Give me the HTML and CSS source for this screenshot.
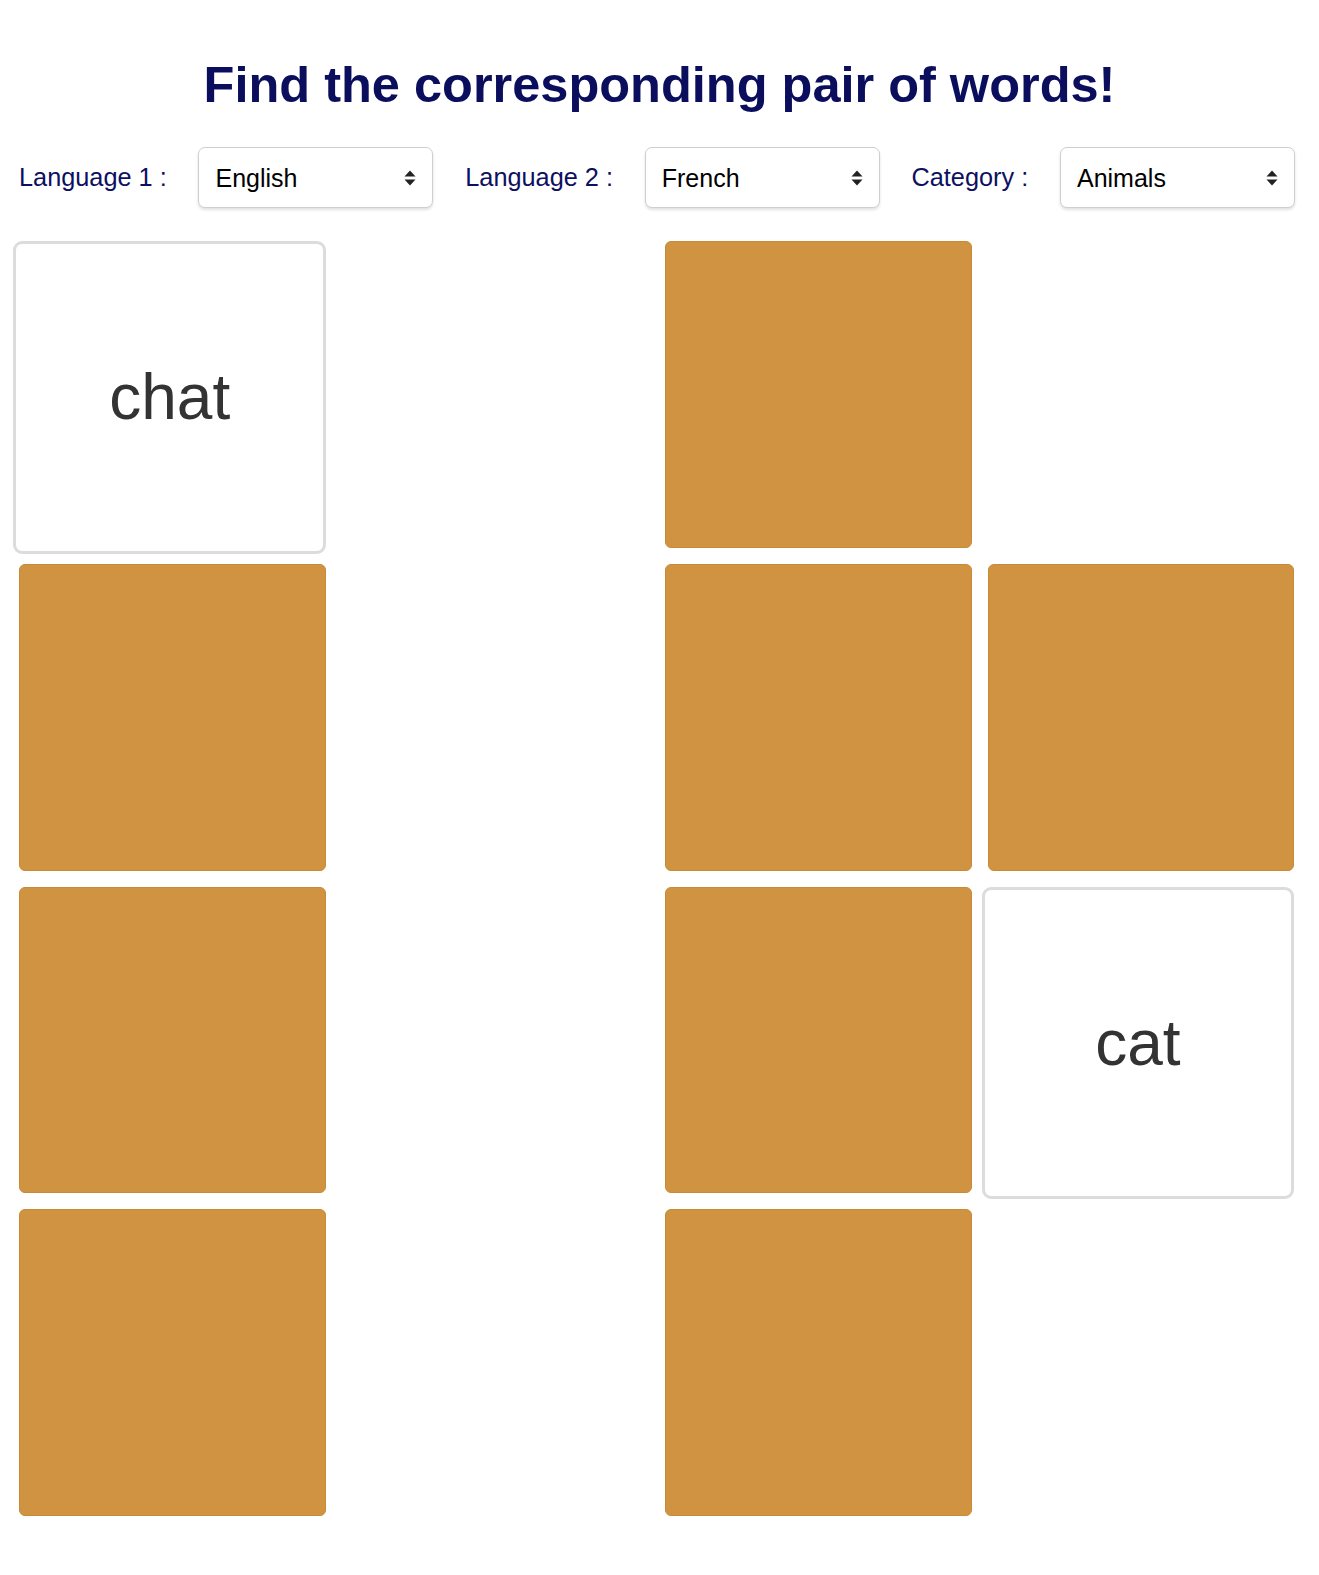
FILE: index.html
```html
<!DOCTYPE html>
<html lang="en">
<head>
<meta charset="utf-8">
<title>Find the corresponding pair of words!</title>
<link rel="stylesheet" href="styles.css">
</head>
<body>
<h1 class="title">Find the corresponding pair of words!</h1>
<div class="controls">
  <label class="ctl-label" for="lang1">Language 1 :</label>
  <div class="select-box">
    <select id="lang1" class="select"><option>English</option><option>French</option><option>Spanish</option></select>
    <svg class="select-arrows" viewBox="0 0 12 16" aria-hidden="true"><path d="M6 0.5 L11.5 6.5 H0.5 Z"/><path d="M0.5 9.5 H11.5 L6 15.5 Z"/></svg>
  </div>
  <label class="ctl-label" for="lang2">Language 2 :</label>
  <div class="select-box">
    <select id="lang2" class="select"><option>French</option><option>English</option><option>Spanish</option></select>
    <svg class="select-arrows" viewBox="0 0 12 16" aria-hidden="true"><path d="M6 0.5 L11.5 6.5 H0.5 Z"/><path d="M0.5 9.5 H11.5 L6 15.5 Z"/></svg>
  </div>
  <label class="ctl-label" for="cat">Category :</label>
  <div class="select-box">
    <select id="cat" class="select"><option>Animals</option><option>Colors</option><option>Food</option></select>
    <svg class="select-arrows" viewBox="0 0 12 16" aria-hidden="true"><path d="M6 0.5 L11.5 6.5 H0.5 Z"/><path d="M0.5 9.5 H11.5 L6 15.5 Z"/></svg>
  </div>
</div>
<div class="board">
  <div class="card flipped"><div class="card-back">chat</div></div>
  <div class="card matched"></div>
  <div class="card"></div>
  <div class="card matched"></div>

  <div class="card"></div>
  <div class="card matched"></div>
  <div class="card"></div>
  <div class="card"></div>

  <div class="card"></div>
  <div class="card matched"></div>
  <div class="card"></div>
  <div class="card flipped"><div class="card-back">cat</div></div>

  <div class="card"></div>
  <div class="card matched"></div>
  <div class="card"></div>
  <div class="card matched"></div>
</div>
</body>
</html>
```
FILE: styles.css
```css
html, body {
  margin: 0;
  padding: 0;
  background: #ffffff;
}

body {
  font-family: "Liberation Sans", Arial, Helvetica, sans-serif;
}

.title {
  margin: 56px 0 0;
  font-size: 50.5px;
  font-weight: 700;
  line-height: 58px;
  text-align: center;
  color: #0a0e5c;
}

.controls {
  display: flex;
  align-items: center;
  justify-content: space-between;
  width: 1276px;
  margin: 33px 0 0 19px;
}

.ctl-label {
  font-size: 25.3px;
  color: #0d1060;
}

.select-box {
  display: flex;
  align-items: center;
  width: 235px;
  height: 61px;
  box-sizing: border-box;
  border: 1px solid #cfcfcf;
  border-radius: 7px;
  background: #fff;
  box-shadow: 0 2px 3px rgba(0, 0, 0, 0.12);
  padding: 0 16px 0 16px;
}

.select {
  flex: 1;
  min-width: 0;
  -webkit-appearance: none;
  appearance: none;
  border: none;
  background: transparent;
  font-family: "Liberation Sans", Arial, Helvetica, sans-serif;
  font-size: 25px;
  color: #000;
  padding: 0;
  outline: none;
}

.select-arrows {
  width: 12px;
  height: 16px;
  fill: #222;
  flex: none;
}

.board {
  display: grid;
  grid-template-columns: repeat(4, 306.75px);
  grid-auto-rows: 306.75px;
  gap: 16px;
  margin: 33px 0 0 19.3px;
}

.card {
  box-sizing: border-box;
  background: #d09342;
  border: 1px solid #c98a33;
  border-radius: 6px;
}

.card.matched {
  visibility: hidden;
}

.card.flipped {
  background: none;
  border-color: transparent;
}

.card-back {
  box-sizing: border-box;
  width: 312.75px;
  height: 312.75px;
  margin: -1px 0 0 -7px;
  background: #fff;
  border: 3px solid #dcdcdc;
  border-radius: 9px;
  display: flex;
  align-items: center;
  justify-content: center;
  font-size: 64px;
  color: #333;
}
```
